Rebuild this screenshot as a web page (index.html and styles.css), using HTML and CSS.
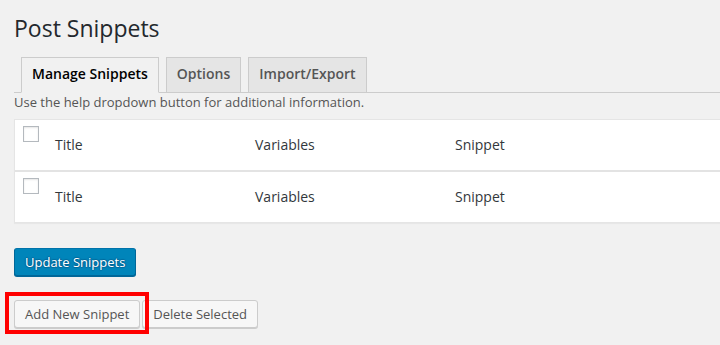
FILE: index.html
```html
<!DOCTYPE html>
<html lang="en">
<head>
    <meta charset="UTF-8">
    <title>Post Snippets</title>
    <link rel="stylesheet" href="styles.css">
</head>
<body>
    <div class="wrap">
        <h1>Post Snippets</h1>

        <div class="tabs">
            <a class="tab active" href="#">Manage Snippets</a>
            <a class="tab" href="#">Options</a>
            <a class="tab" href="#">Import/Export</a>
        </div>

        <p class="desc">Use the help dropdown button for additional information.</p>

        <div class="snippets">
            <div class="row">
                <div class="cell-check"><input type="checkbox"></div>
                <div class="cell">Title</div>
                <div class="cell">Variables</div>
                <div class="cell">Snippet</div>
            </div>
            <div class="row">
                <div class="cell-check"><input type="checkbox"></div>
                <div class="cell">Title</div>
                <div class="cell">Variables</div>
                <div class="cell">Snippet</div>
            </div>
        </div>

        <div class="actions">
            <button class="button button-primary">Update Snippets</button>
        </div>

        <div class="actions actions-second">
            <span class="marked">
                <button class="button">Add New Snippet</button>
                <span class="highlight"></span>
            </span>
            <button class="button">Delete Selected</button>
        </div>
    </div>
</body>
</html>
```

FILE: styles.css
```css
html {
    overflow: hidden;
}

body {
    margin: 0;
    background: #f1f1f1;
    color: #444;
    font-family: "Open Sans", "Liberation Sans", sans-serif;
    font-size: 13px;
}

.wrap {
    padding: 14px 0 20px 14px;
    margin-right: -20px;
}

h1 {
    margin: 0;
    font-size: 23px;
    font-weight: 400;
    line-height: 29px;
    color: #23282d;
}

/* tabs */
.tabs {
    display: flex;
    gap: 7px;
    margin-top: 14px;
    padding-left: 7px;
    border-bottom: 1px solid #ccc;
}

.tab {
    display: block;
    margin-bottom: -1px;
    padding: 4px 10px 6px;
    border: 1px solid #ccc;
    background: #e5e5e5;
    color: #555;
    font-size: 14px;
    font-weight: 600;
    line-height: 24px;
    text-decoration: none;
}

.tab.active {
    background: #f1f1f1;
    border-bottom-color: #f1f1f1;
    color: #000;
}

.desc {
    margin: 0 0 7px;
    line-height: 19px;
    color: #555;
}

/* snippet list */
.snippets {
    background: #fff;
    border: 1px solid #e5e5e5;
    box-shadow: 0 1px 1px rgba(0, 0, 0, 0.04);
}

.row {
    display: grid;
    grid-template-columns: 40px 200px 200px 1fr;
    height: 50px;
}

.row + .row {
    border-top: 2px solid #e3e3e3;
}

.cell-check input {
    appearance: none;
    -webkit-appearance: none;
    display: block;
    width: 16px;
    height: 16px;
    margin: 6px 0 0 8px;
    border: 1px solid #b4b9be;
    background: #fff;
    box-shadow: inset 0 1px 2px rgba(0, 0, 0, 0.1);
}

.cell {
    padding-top: 15px;
    font-size: 14px;
    line-height: 20px;
    color: #32373c;
}

/* buttons */
.actions {
    display: flex;
    gap: 2px;
    margin-top: 25px;
}

.actions-second {
    margin-top: 24px;
}

.button {
    height: 28px;
    box-sizing: border-box;
    padding: 0 10px 1px;
    border: 1px solid #ccc;
    border-radius: 3px;
    background: #f7f7f7;
    box-shadow: 0 1px 0 #ccc;
    color: #555;
    font-family: inherit;
    font-size: 13px;
    line-height: 26px;
    white-space: nowrap;
}

.button-primary {
    background: #0085ba;
    border-color: #0073aa #006799 #006799;
    box-shadow: 0 1px 0 #006799;
    color: #fff;
    text-shadow: 0 -1px 1px #006799, 1px 0 1px #006799, 0 1px 1px #006799, -1px 0 1px #006799;
}

.marked {
    position: relative;
    display: block;
}

.marked .button {
    display: block;
}

.highlight {
    position: absolute;
    left: -9px;
    top: -8px;
    width: 144px;
    height: 42px;
    box-sizing: border-box;
    border: 4px solid #f00;
    z-index: 2;
    pointer-events: none;
}
```
